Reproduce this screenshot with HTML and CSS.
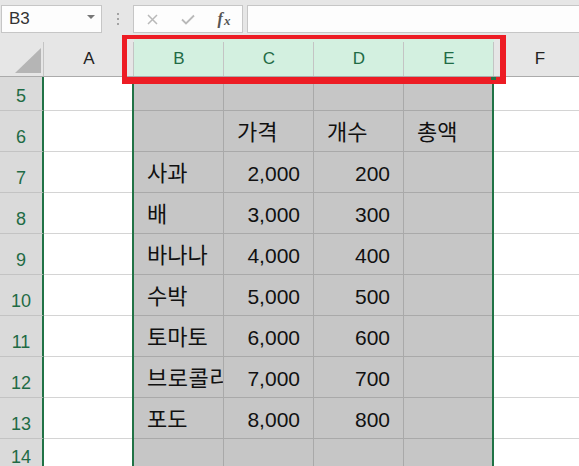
FILE: index.html
```html
<!DOCTYPE html>
<html lang="ko">
<head>
<meta charset="utf-8">
<link rel="stylesheet" href="styles.css">
</head>
<body>
<div class="app">
  <div class="toolbar">
    <div class="namebox"><span class="name">B3</span><span class="caret"></span></div>
    <div class="grip"><i></i><i></i><i></i></div>
    <div class="fxbtns">
      <span class="slot"><svg width="11" height="11" viewBox="0 0 11 11"><path d="M1 1L10 10M10 1L1 10" stroke="#b9b9b9" stroke-width="1.5" fill="none"/></svg></span>
      <span class="slot"><svg width="14" height="11" viewBox="0 0 14 11"><path d="M1 5.5L5 9.5L13 1.5" stroke="#b9b9b9" stroke-width="1.8" fill="none"/></svg></span>
      <span class="slot fx">f<span class="fxx">x</span></span>
    </div>
    <div class="formula"></div>
  </div>
  <div class="sheet">
    <div class="corner"><svg width="26" height="25" viewBox="0 0 26 25"><polygon points="26,0 26,25 0,25" fill="#b5b5b5"/></svg></div>
    <div class="ch">A</div>
    <div class="ch sel">B</div>
    <div class="ch sel">C</div>
    <div class="ch sel">D</div>
    <div class="ch sel">E</div>
    <div class="ch">F</div>

    <div class="rh">5</div><div class="c"></div><div class="c s"></div><div class="c s"></div><div class="c s"></div><div class="c s"></div><div class="c"></div>
    <div class="rh">6</div><div class="c"></div><div class="c s"></div><div class="c s">가격</div><div class="c s">개수</div><div class="c s">총액</div><div class="c"></div>
    <div class="rh">7</div><div class="c"></div><div class="c s">사과</div><div class="c s n">2,000</div><div class="c s n">200</div><div class="c s"></div><div class="c"></div>
    <div class="rh">8</div><div class="c"></div><div class="c s">배</div><div class="c s n">3,000</div><div class="c s n">300</div><div class="c s"></div><div class="c"></div>
    <div class="rh">9</div><div class="c"></div><div class="c s">바나나</div><div class="c s n">4,000</div><div class="c s n">400</div><div class="c s"></div><div class="c"></div>
    <div class="rh">10</div><div class="c"></div><div class="c s">수박</div><div class="c s n">5,000</div><div class="c s n">500</div><div class="c s"></div><div class="c"></div>
    <div class="rh">11</div><div class="c"></div><div class="c s">토마토</div><div class="c s n">6,000</div><div class="c s n">600</div><div class="c s"></div><div class="c"></div>
    <div class="rh">12</div><div class="c"></div><div class="c s clip">브로콜리</div><div class="c s n">7,000</div><div class="c s n">700</div><div class="c s"></div><div class="c"></div>
    <div class="rh">13</div><div class="c"></div><div class="c s">포도</div><div class="c s n">8,000</div><div class="c s n">800</div><div class="c s"></div><div class="c"></div>
    <div class="rh">14</div><div class="c"></div><div class="c s"></div><div class="c s"></div><div class="c s"></div><div class="c s"></div><div class="c"></div>

    <div class="selection"></div>
    <div class="redbox"></div>
    <div class="handle"></div>
  </div>
</div>
</body>
</html>
```

FILE: styles.css
```css
* { box-sizing: border-box; }
html, body {
  margin: 0;
  padding: 0;
  background: #ffffff;
  overflow: hidden;
}
body {
  width: 579px;
  height: 466px;
  font-family: "Liberation Sans", "Noto Sans CJK KR", sans-serif;
  color: #000;
}
.app {
  width: 579px;
  height: 466px;
  overflow: hidden;
}

/* formula bar */
.toolbar {
  height: 36px;
  background: #e6e6e6;
  display: flex;
  align-items: flex-start;
  padding-top: 5px;
}
.namebox {
  margin-left: 1px;
  width: 101px;
  height: 28px;
  background: #fdfdfd;
  border: 1px solid #c6c6c6;
  display: flex;
  align-items: center;
  justify-content: space-between;
  padding: 0 6px 0 7px;
}
.name {
  font-size: 17px;
  line-height: 20px;
  color: #333;
}
.caret {
  width: 0;
  height: 0;
  border-left: 4px solid transparent;
  border-right: 4px solid transparent;
  border-top: 4px solid #777;
  margin-top: -4px;
}
.grip {
  margin-left: 14px;
  width: 3px;
  height: 28px;
  display: flex;
  flex-direction: column;
  align-items: center;
  justify-content: center;
  gap: 3px;
}
.grip i {
  display: block;
  width: 2px;
  height: 2px;
  background: #a3a3a3;
}
.fxbtns {
  margin-left: 14px;
  width: 110px;
  height: 28px;
  background: #fdfdfd;
  border: 1px solid #c6c6c6;
  display: flex;
}
.slot {
  width: 36px;
  height: 26px;
  display: flex;
  align-items: center;
  justify-content: center;
}
.fx {
  font-family: "Liberation Serif", serif;
  font-style: italic;
  font-weight: bold;
  font-size: 16px;
  color: #555;
}
.fxx {
  font-size: 13px;
  margin-top: 3px;
  margin-left: 1px;
}
.formula {
  margin-left: 4px;
  flex: 1;
  height: 28px;
  background: #fdfdfd;
  border: 1px solid #c6c6c6;
  border-right: none;
}

/* sheet grid */
.sheet {
  position: relative;
  display: grid;
  grid-template-columns: 44px 90px 90px 90px 90px 90px 92px;
  grid-template-rows: 41px 34px repeat(8, 41px) 33px;
}
.corner, .ch {
  position: relative;
  background: #e6e6e6;
  border-bottom: 1px solid #ababab;
}
.corner::after, .ch::after {
  content: "";
  position: absolute;
  right: 0;
  top: 6px;
  bottom: 0;
  width: 1px;
  background: #c4c4c4;
}
.corner {
  display: flex;
  align-items: flex-end;
  justify-content: flex-end;
  padding: 0 3px 3px 0;
}
.ch {
  display: flex;
  align-items: flex-end;
  justify-content: center;
  padding-bottom: 7px;
  font-size: 17px;
  line-height: 20px;
  color: #222;
}
.ch.sel {
  background: #d3f0e0;
  color: #1f6b45;
}
.rh {
  background: #dadada;
  border-right: 2px solid #217346;
  border-bottom: 1px solid #c3c3c3;
  display: flex;
  align-items: flex-end;
  justify-content: center;
  padding-bottom: 4px;
  font-size: 18px;
  line-height: 20px;
  color: #1f6b45;
}
.c {
  background: #ffffff;
  border-bottom: 1px solid #d4d4d4;
  border-right: 1px solid #d4d4d4;
  display: flex;
  align-items: flex-end;
  justify-content: flex-start;
  padding: 0 13px 6px 13px;
  font-size: 22px;
  line-height: 24px;
  white-space: nowrap;
  overflow: hidden;
  color: #111;
}
.c.s {
  background: #c6c6c6;
  border-bottom-color: #a9a9a9;
  border-right-color: #a9a9a9;
}
.c.n {
  justify-content: flex-end;
  font-size: 21px;
}
.c.clip {
  padding-right: 0;
  letter-spacing: 0.5px;
}

/* overlays */
.selection {
  position: absolute;
  left: 132px;
  top: 41px;
  width: 362px;
  bottom: 0;
  border-left: 2px solid #217346;
  border-right: 2px solid #217346;
  pointer-events: none;
}
.redbox {
  position: absolute;
  left: 122px;
  top: -1px;
  width: 384px;
  height: 49px;
  border-style: solid;
  border-color: #ed1c24;
  border-width: 4px 6px 7px 5px;
}
.handle {
  position: absolute;
  left: 491px;
  top: 41px;
  width: 5px;
  height: 3px;
  background: #217346;
}
```
